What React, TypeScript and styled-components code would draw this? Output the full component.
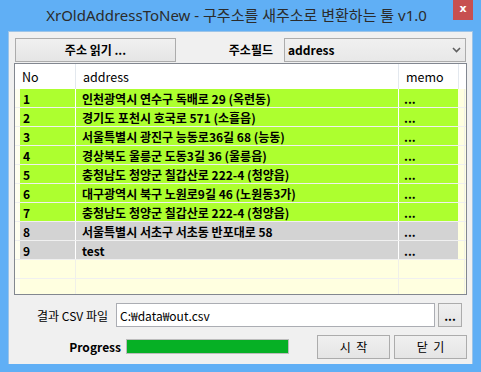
import React from 'react';
import styled, { createGlobalStyle } from 'styled-components';

const GlobalStyle = createGlobalStyle`
  html, body {
    margin: 0;
    padding: 0;
    background: #60aff5;
  }
  * {
    box-sizing: border-box;
  }
`;

const UI_FONT = `"Noto Sans CJK KR", "Noto Sans", sans-serif`;

const Frame = styled.div`
  width: 481px;
  height: 372px;
  background: #60aff5;
  padding: 0 8px 8px 8px;
  display: flex;
  flex-direction: column;
  font-family: ${UI_FONT};
  color: #000;
`;

const TitleBar = styled.div`
  height: 31px;
  display: grid;
  grid-template-columns: 1fr auto 1fr;
  align-items: start;
  margin: 0 -8px;
  padding-right: 8px;
`;

const TitleText = styled.div`
  grid-column: 2;
  padding-top: 4px;
  font-family: "Noto Sans", "Noto Sans CJK KR", sans-serif;
  font-size: 15px;
  line-height: 22px;
  color: #2b2b2b;
  white-space: nowrap;
`;

const CloseButton = styled.div`
  grid-column: 3;
  justify-self: end;
  width: 20px;
  height: 20px;
  background: #c75050;
  color: #fff;
  font-family: "DejaVu Sans", sans-serif;
  font-weight: bold;
  font-size: 11px;
  line-height: 18px;
  text-align: center;
`;

const Client = styled.div`
  flex: 1;
  background: #f0f0f0;
  border: 1px solid #9cc4e8;
  border-bottom: none;
  padding: 5px 5px 3px 5px;
  display: flex;
  flex-direction: column;
`;

const TopRow = styled.div`
  display: flex;
  align-items: center;
  height: 25px;
  padding-left: 1px;
`;

const Button = styled.div<{ $w: number; $bold?: boolean }>`
  width: ${(p) => p.$w}px;
  height: 24px;
  border: 1px solid #acacac;
  background: linear-gradient(#f0f0f0, #e5e5e5);
  display: flex;
  align-items: center;
  justify-content: center;
  font-size: 12px;
  font-weight: ${(p) => (p.$bold ? 700 : 400)};
  white-space: pre;
`;

const FieldLabel = styled.div<{ $bold?: boolean }>`
  font-size: 12px;
  font-weight: ${(p) => (p.$bold ? 700 : 400)};
  white-space: nowrap;
`;

const Combo = styled.div`
  width: 182px;
  height: 24px;
  margin-left: 11px;
  margin-right: 1px;
  border: 1px solid #acacac;
  background: linear-gradient(#f0f0f0, #e8e8e8);
  display: flex;
  align-items: center;
  padding: 0 4px 0 3px;
  font-size: 12px;
  font-weight: 700;
`;

const ComboText = styled.span`
  flex: 1;
`;

const Spacer = styled.div`
  flex: 1;
`;

const ListBox = styled.div`
  margin-top: 1px;
  height: 232px;
  border: 1px solid #828790;
  background: #fffff0;
  display: flex;
  flex-direction: column;
  overflow: hidden;
`;

const HeaderRow = styled.div`
  display: grid;
  grid-template-columns: 61px 323px 60px 1fr;
  height: 25px;
  background: #fff;
  flex-shrink: 0;
`;

const HeaderCell = styled.div`
  border-right: 1px solid #e3e8ee;
  display: flex;
  align-items: center;
  padding-left: 7px;
  font-size: 12.5px;
  &:last-child {
    border-right: none;
  }
`;

const DataRow = styled.div`
  display: grid;
  grid-template-columns: 5px 55px 1px 322px 1px 59px 1fr;
  height: 19px;
  border-bottom: 1px solid #f0f0f0;
  flex-shrink: 0;
  background: #ffffe0;
`;

const Gutter = styled.div`
  background: #fffff0;
`;

const Sep = styled.div<{ $empty?: boolean }>`
  background: ${(p) => (p.$empty ? '#f0f0e8' : '#ffffff')};
`;

const Cell = styled.div<{ $bg: string; $pad?: number }>`
  background: ${(p) => p.$bg};
  display: flex;
  align-items: center;
  padding-left: ${(p) => p.$pad ?? 3}px;
  font-size: 12px;
  font-weight: 700;
  white-space: nowrap;
  overflow: hidden;
`;

const Filler = styled.div`
  background: #ffffe0;
  border-right: 1px solid #f0f0e8;
  width: 7px;
`;

const FileRow = styled.div`
  display: flex;
  align-items: center;
  margin-top: 8px;
  height: 24px;
`;

const FileLabel = styled(FieldLabel)`
  width: 94px;
  text-align: right;
`;

const TextBox = styled.div`
  margin-left: 8px;
  width: 319px;
  height: 24px;
  border: 1px solid #abadb3;
  background: #fff;
  display: flex;
  align-items: center;
  padding-left: 3px;
  font-size: 12px;
`;

const BrowseButton = styled(Button)`
  margin-left: 3px;
  font-weight: 700;
`;

const ActionRow = styled.div`
  display: flex;
  align-items: center;
  margin-top: 7px;
  height: 25px;
`;

const ProgressLabel = styled(FieldLabel)`
  width: 107px;
  text-align: right;
`;

const ProgressTrack = styled.div`
  margin-left: 5px;
  width: 163px;
  height: 15px;
  border: 1px solid #bcbcbc;
  background: #e6e6e6;
`;

const ProgressFill = styled.div`
  height: 100%;
  background: #06b025;
`;

const ActionButtons = styled.div`
  margin-left: auto;
  display: flex;
  gap: 4px;
`;

const rows: { no: string; address: string; ok: boolean }[] = [
  { no: '1', address: '인천광역시 연수구 독배로 29 (옥련동)', ok: true },
  { no: '2', address: '경기도 포천시 호국로 571 (소흘읍)', ok: true },
  { no: '3', address: '서울특별시 광진구 능동로36길 68 (능동)', ok: true },
  { no: '4', address: '경상북도 울릉군 도동3길 36 (울릉읍)', ok: true },
  { no: '5', address: '충청남도 청양군 칠갑산로 222-4 (청양읍)', ok: true },
  { no: '6', address: '대구광역시 북구 노원로9길 46 (노원동3가)', ok: true },
  { no: '7', address: '충청남도 청양군 칠갑산로 222-4 (청양읍)', ok: true },
  { no: '8', address: '서울특별시 서초구 서초동 반포대로 58', ok: false },
  { no: '9', address: 'test', ok: false },
];

const App: React.FC = () => {
  const progress = 100;
  return (
    <>
      <GlobalStyle />
      <Frame>
        <TitleBar>
          <TitleText>XrOldAddressToNew - 구주소를 새주소로 변환하는 툴 v1.0</TitleText>
          <CloseButton>x</CloseButton>
        </TitleBar>
        <Client>
          <TopRow>
            <Button $w={161} $bold>
              주소 읽기 ...
            </Button>
            <Spacer />
            <FieldLabel $bold>주소필드</FieldLabel>
            <Combo>
              <ComboText>address</ComboText>
              <svg width="9" height="6" viewBox="0 0 9 6">
                <path d="M1 1 L4.5 4.5 L8 1" stroke="#606060" strokeWidth="1.6" fill="none" />
              </svg>
            </Combo>
          </TopRow>
          <ListBox>
            <HeaderRow>
              <HeaderCell>No</HeaderCell>
              <HeaderCell>address</HeaderCell>
              <HeaderCell>memo</HeaderCell>
              <HeaderCell />
            </HeaderRow>
            {rows.map((r) => {
              const bg = r.ok ? '#adff2f' : '#d3d3d3';
              return (
                <DataRow key={r.no}>
                  <Gutter />
                  <Cell $bg={bg}>{r.no}</Cell>
                  <Sep />
                  <Cell $bg={bg} $pad={6}>
                    {r.address}
                  </Cell>
                  <Sep />
                  <Cell $bg={bg} $pad={5}>
                    ...
                  </Cell>
                  <Filler />
                </DataRow>
              );
            })}
            {[0, 1].map((i) => (
              <DataRow key={`e${i}`}>
                <Gutter />
                <Cell $bg="#ffffe0" />
                <Sep $empty />
                <Cell $bg="#ffffe0" />
                <Sep $empty />
                <Cell $bg="#ffffe0" />
                <Filler />
              </DataRow>
            ))}
          </ListBox>
          <FileRow>
            <FileLabel>결과 CSV 파일</FileLabel>
            <TextBox>C:₩data₩out.csv</TextBox>
            <BrowseButton $w={24}>...</BrowseButton>
          </FileRow>
          <ActionRow>
            <ProgressLabel $bold>Progress</ProgressLabel>
            <ProgressTrack>
              <ProgressFill style={{ width: `${progress}%` }} />
            </ProgressTrack>
            <ActionButtons>
              <Button $w={73}>시  작</Button>
              <Button $w={73}>닫  기</Button>
            </ActionButtons>
          </ActionRow>
        </Client>
      </Frame>
    </>
  );
};

export default App;
